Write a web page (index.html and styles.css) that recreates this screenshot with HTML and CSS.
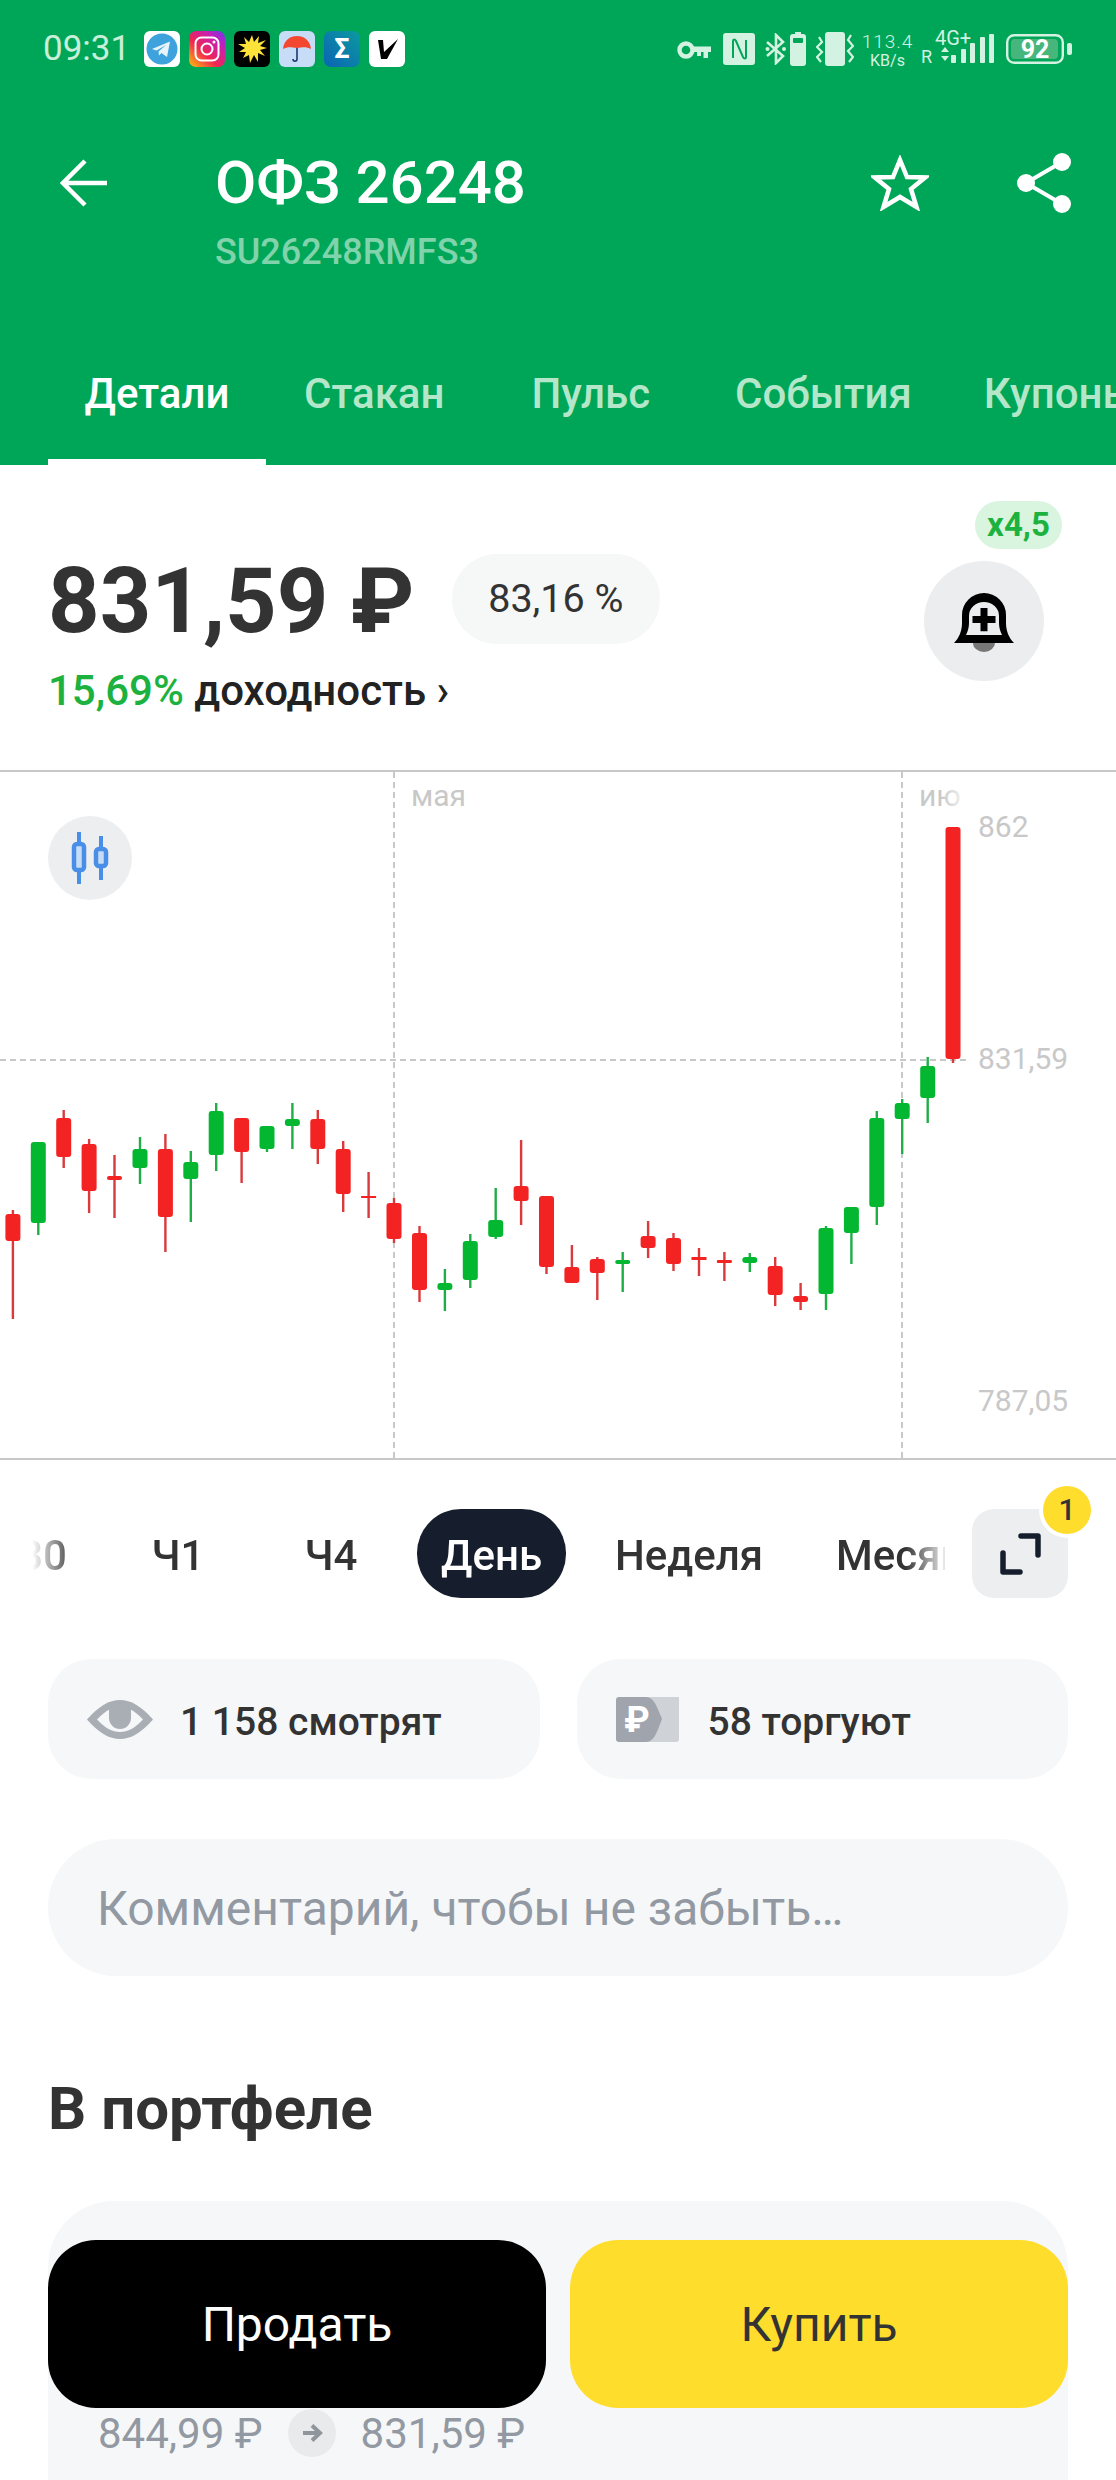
FILE: index.html
```html
<!DOCTYPE html>
<html lang="ru">
<head>
    <meta charset="UTF-8">
    <meta name="viewport" content="width=device-width, initial-scale=1.0">
    <title>ОФЗ 26248</title>
    <link rel="stylesheet" href="styles.css">
</head>
<body>
    <header class="header">
        <div class="status-bar">
            <span class="time">09:31</span>
            <div class="notif-icons">
                <svg class="notif" viewBox="0 0 36 36">
                    <rect width="36" height="36" rx="6" fill="#fff"/>
                    <circle cx="18" cy="18" r="15.5" fill="#3ea2dc"/>
                    <path d="M8 18 L26 10.5 L23 26 L17.5 22 L15 24.5 L14.5 20.5 L22 14 L12.5 19.5 Z" fill="#e8f4fb"/>
                </svg>
                <svg class="notif" viewBox="0 0 36 36">
                    <defs>
                        <linearGradient id="insta" x1="0" y1="1" x2="1" y2="0">
                            <stop offset="0" stop-color="#fdc20a"/>
                            <stop offset="0.4" stop-color="#f1264f"/>
                            <stop offset="0.75" stop-color="#c51fb8"/>
                            <stop offset="1" stop-color="#6a38f0"/>
                        </linearGradient>
                    </defs>
                    <rect width="36" height="36" rx="7" fill="url(#insta)"/>
                    <rect x="6.5" y="6.5" width="23" height="23" rx="6" fill="none" stroke="#fff" stroke-width="2"/>
                    <circle cx="18" cy="18" r="5.5" fill="none" stroke="#fff" stroke-width="2"/>
                    <circle cx="25" cy="11" r="1.5" fill="#fff"/>
                </svg>
                <svg class="notif" viewBox="0 0 36 36">
                    <rect width="36" height="36" rx="6" fill="#000"/>
                    <path d="M18 4 L20 11 L25 5 L24 12 L32 9 L26 15 L33 17 L26 19 L31 25 L24 22 L24 31 L20 24 L16 32 L15 24 L9 27 L12 21 L5 21 L11 17 L4 13 L12 13 L10 6 L15 11 Z" fill="#fde23a"/>
                </svg>
                <svg class="notif" viewBox="0 0 36 36">
                    <rect width="36" height="36" rx="6" fill="#c6dcf7"/>
                    <path d="M4 18 C5 9 11 5 18 5 C25 5 31 9 32 18 C28 16 25 16 18 17 C11 16 8 16 4 18 Z" fill="#f4472f"/>
                    <path d="M18 17 V28 C18 31 14 31 14 28" fill="none" stroke="#1d3a70" stroke-width="1.6"/>
                </svg>
                <svg class="notif" viewBox="0 0 36 36">
                    <defs>
                        <linearGradient id="sigma" x1="0" y1="1" x2="1" y2="0">
                            <stop offset="0" stop-color="#0a64b4"/>
                            <stop offset="1" stop-color="#0c9aa0"/>
                        </linearGradient>
                    </defs>
                    <rect width="36" height="36" rx="7" fill="url(#sigma)"/>
                    <text class="sigma-text" x="18" y="27">Σ</text>
                </svg>
                <svg class="notif" viewBox="0 0 36 36">
                    <rect width="36" height="36" rx="6" fill="#fff"/>
                    <path d="M9 9 H14 L15 21 L29 8 L18 28 H12 Z" fill="#000"/>
                </svg>
            </div>
            <div class="sys-icons">
                <svg class="sys-key" viewBox="0 0 34 20" width="34" height="20">
                    <circle cx="9" cy="10" r="6.5" fill="none" stroke="currentColor" stroke-width="4.4"/>
                    <path d="M14 6.5 H34 V12 H31 V18 H26.5 V12 H24 V16 H20 V12 H14 Z" fill="currentColor"/>
                </svg>
                <svg class="sys-nfc" viewBox="0 0 32 32" width="32" height="32">
                    <rect width="32" height="32" rx="3" fill="currentColor"/>
                    <path d="M10 25 V8 C10 6 12 6 13 8 L20 24 C21 26 23 26 23 24 V7" fill="none" stroke="#00a658" stroke-width="2"/>
                </svg>
                <svg class="sys-bt" viewBox="0 0 21 32" width="21" height="32">
                    <path d="M2 9 L18 23 L11 30 V2 L18 9 L2 23" fill="none" stroke="currentColor" stroke-width="2.6"/>
                    <circle cx="2.5" cy="16" r="2" fill="currentColor"/>
                    <circle cx="19" cy="16" r="2" fill="currentColor"/>
                </svg>
                <svg class="sys-cell" viewBox="0 0 16 34" width="16" height="34">
                    <path d="M5 0 H11 V2 H13 Q16 2 16 5 V31 Q16 34 13 34 H3 Q0 34 0 31 V5 Q0 2 3 2 H5 Z" fill="currentColor"/>
                    <rect x="3" y="6" width="10" height="5" rx="1" fill="#00a658"/>
                </svg>
                <svg class="sys-vibrate" viewBox="0 0 38 34" width="38" height="34">
                    <rect x="9" y="0" width="20" height="34" rx="3" fill="currentColor"/>
                    <path d="M3 5 L6 10 L1 15 L6 20 L1 25 L5 30" fill="none" stroke="currentColor" stroke-width="2.2"/>
                    <path d="M35 3 L32 8 L37 14 L32 19 L37 25 L33 30" fill="none" stroke="currentColor" stroke-width="2.2"/>
                </svg>
                <div class="sys-speed">
                    <span class="speed-num">113.4</span>
                    <span class="speed-unit">KB/s</span>
                </div>
                <svg class="sys-net" viewBox="0 -5 73 43" width="73" height="43">
                    <text class="net-text" x="14" y="13">4G+</text>
                    <text class="net-text net-roaming" x="0" y="31">R</text>
                    <path d="M20 20 L24 15 L28 20 Z M20 24 H28 L24 29 Z" fill="currentColor"/>
                    <rect x="30" y="23" width="5" height="8" rx="1" fill="currentColor"/>
                    <rect x="40" y="17" width="5" height="14" rx="1" fill="currentColor"/>
                    <rect x="49" y="11" width="5" height="20" rx="1" fill="currentColor"/>
                    <rect x="59" y="5" width="5" height="26" rx="1" fill="currentColor"/>
                    <rect x="68" y="2" width="5" height="29" rx="1" fill="currentColor"/>
                </svg>
                <svg class="sys-battery" viewBox="0 0 66 30" width="66" height="30">
                    <rect x="1.2" y="1.2" width="55.6" height="27.6" rx="7" fill="none" stroke="currentColor" stroke-width="2.4"/>
                    <rect x="5" y="5" width="47" height="20" rx="4" fill="#47b67d"/>
                    <rect x="61" y="9" width="5" height="12" rx="2" fill="currentColor"/>
                    <text class="battery-text" x="29" y="24">92</text>
                </svg>
            </div>
        </div>

        <div class="toolbar">
            <div class="tool-icon back-icon">
                <svg viewBox="0 0 48 48" width="48" height="48">
                    <path d="M47 24 H3 M25 2 L3 24 L25 46" fill="none" stroke="#fff" stroke-width="4.5"/>
                </svg>
            </div>
            <div class="title-block">
                <h1 class="title">ОФЗ 26248</h1>
                <div class="isin">SU26248RMFS3</div>
            </div>
            <div class="tool-icon star-icon">
                <svg viewBox="0 0 58 56" width="58" height="56">
                    <path d="M29 5 L36 22 L54 22.5 L40 34 L45.5 52 L29 42 L12.5 52 L18 34 L4 22.5 L22 22 Z" fill="none" stroke="#fff" stroke-width="4.5"/>
                </svg>
            </div>
            <div class="tool-icon share-icon">
                <svg viewBox="0 0 54 60" width="54" height="60">
                    <path d="M45 9 L9 30 L45 51" fill="none" stroke="#fff" stroke-width="4"/>
                    <circle cx="45" cy="9" r="9" fill="#fff"/>
                    <circle cx="9" cy="30" r="9" fill="#fff"/>
                    <circle cx="45" cy="51" r="9" fill="#fff"/>
                </svg>
            </div>
        </div>

        <nav class="tabs">
            <div class="tab active">Детали</div>
            <div class="tab">Стакан</div>
            <div class="tab">Пульс</div>
            <div class="tab">События</div>
            <div class="tab">Купоны</div>
        </nav>
    </header>

    <section class="price-block">
        <div class="price-info">
            <div class="price-row">
                <span class="price">831,59 ₽</span>
                <span class="percent-pill">83,16 %</span>
            </div>
            <div class="yield"><span class="yield-num">15,69%</span> доходность ›</div>
        </div>
        <div class="bell">
            <span class="bell-badge">x4,5</span>
            <svg viewBox="0 0 60 59" width="60" height="59">
                <path fill-rule="evenodd" d="M0 50 C5 45 8 38 8 30 V22 A22 22 0 0 1 52 22 V30 C52 38 55 45 60 50 Z M12 42 H48 C46 38 45 34 45 30 V23 A15 14 0 0 0 15 23 V30 C15 34 14 38 12 42 Z" fill="#000"/>
                <path d="M26.5 15 H33.5 V23 H41.5 V30 H33.5 V38.3 H26.5 V30 H18.5 V23 H26.5 Z" fill="#000"/>
                <path d="M19 50 H41 A11 9 0 0 1 19 50 Z" fill="#777"/>
            </svg>
        </div>
    </section>

    <section class="chart">
        <svg class="chart-svg" viewBox="0 770 1116 690" width="1116" height="690">
            <defs>
                <linearGradient id="fade-month" x1="0" x2="1" y1="0" y2="0">
                    <stop offset="0.5" stop-color="#c8c8c8"/>
                    <stop offset="1" stop-color="#ececec"/>
                </linearGradient>
            </defs>
            <path class="grid-line" d="M394 772 V1458 M902 772 V1458 M0 1060 H966"/>
            <text class="axis-label" x="411" y="806">мая</text>
            <text class="axis-label fade-label" x="919" y="806">ию</text>
            <text class="axis-label" x="978" y="837">862</text>
            <text class="axis-label" x="978" y="1069">831,59</text>
            <text class="axis-label" x="978" y="1411">787,05</text>

            <path class="wick-red" d="M12.9 1210V1319 M63.7 1110V1168 M89.1 1139V1213 M114.5 1155V1218 M165.4 1134V1252 M241.6 1118V1183 M317.8 1110V1164 M343.2 1141V1212 M368.6 1172V1218 M394 1198V1243 M419.5 1226V1302 M521.1 1140V1225 M546.5 1196V1274 M571.9 1245V1283 M597.3 1257V1300 M648.1 1221V1258 M673.5 1233V1271 M699 1248V1276 M724.4 1252V1281 M775.2 1257V1306 M800.6 1283V1310 M953 1050V1063"/>
            <path class="wick-green" d="M38.3 1142V1235 M140 1137V1184 M190.8 1151V1222 M216.2 1103V1171 M267 1126V1152 M292.4 1103V1149 M444.9 1269V1311 M470.3 1234V1288 M495.7 1188V1239 M622.7 1252V1292 M749.8 1253V1272 M826 1226V1310 M851.4 1207V1264 M876.8 1111V1225 M902.2 1099V1154 M927.7 1057V1123"/>

            <g class="body-red">
                <rect x="5.4" y="1214" width="15" height="27" rx="3"/>
                <rect x="56.2" y="1118" width="15" height="39" rx="3"/>
                <rect x="81.6" y="1144" width="15" height="47" rx="3"/>
                <rect x="107" y="1176" width="15" height="4" rx="2"/>
                <rect x="157.9" y="1149" width="15" height="68" rx="3"/>
                <rect x="234.1" y="1118" width="15" height="34" rx="3"/>
                <rect x="310.3" y="1119" width="15" height="30" rx="3"/>
                <rect x="335.7" y="1149" width="15" height="45" rx="3"/>
                <rect x="361.1" y="1196" width="15" height="2"/>
                <rect x="386.5" y="1203" width="15" height="36" rx="3"/>
                <rect x="412" y="1233" width="15" height="57" rx="3"/>
                <rect x="513.6" y="1186" width="15" height="15" rx="3"/>
                <rect x="539" y="1196" width="15" height="71" rx="3"/>
                <rect x="564.4" y="1267" width="15" height="16" rx="3"/>
                <rect x="589.8" y="1259" width="15" height="14" rx="3"/>
                <rect x="640.6" y="1236" width="15" height="12" rx="3"/>
                <rect x="666" y="1238" width="15" height="26" rx="3"/>
                <rect x="691.5" y="1257" width="15" height="3"/>
                <rect x="716.9" y="1260" width="15" height="3" rx="1"/>
                <rect x="767.7" y="1266" width="15" height="29" rx="3"/>
                <rect x="793.1" y="1296" width="15" height="6" rx="3"/>
                <rect x="945.5" y="827" width="15" height="232" rx="3"/>
            </g>
            <g class="body-green">
                <rect x="30.8" y="1142" width="15" height="81" rx="3"/>
                <rect x="132.5" y="1149" width="15" height="19" rx="3"/>
                <rect x="183.3" y="1162" width="15" height="17" rx="3"/>
                <rect x="208.7" y="1111" width="15" height="44" rx="3"/>
                <rect x="259.5" y="1126" width="15" height="23" rx="3"/>
                <rect x="284.9" y="1119" width="15" height="7" rx="3"/>
                <rect x="437.4" y="1283" width="15" height="7" rx="3"/>
                <rect x="462.8" y="1241" width="15" height="39" rx="3"/>
                <rect x="488.2" y="1220" width="15" height="17" rx="3"/>
                <rect x="615.2" y="1260" width="15" height="4" rx="2"/>
                <rect x="742.3" y="1257" width="15" height="6" rx="3"/>
                <rect x="818.5" y="1228" width="15" height="66" rx="3"/>
                <rect x="843.9" y="1207" width="15" height="26" rx="3"/>
                <rect x="869.3" y="1118" width="15" height="89" rx="3"/>
                <rect x="894.7" y="1103" width="15" height="16" rx="3"/>
                <rect x="920.2" y="1066" width="15" height="32" rx="3"/>
            </g>
        </svg>
        <div class="chart-type">
            <svg viewBox="0 0 44 52" width="44" height="52">
                <path d="M11 0 V52 M33 4 V48" fill="none" stroke="#4a8fe7" stroke-width="4"/>
                <rect x="6" y="12" width="10" height="26" rx="3" fill="#c9dcf5" stroke="#4a8fe7" stroke-width="4.5"/>
                <rect x="28" y="17" width="10" height="17" rx="3" fill="#c9dcf5" stroke="#4a8fe7" stroke-width="4.5"/>
            </svg>
        </div>
    </section>

    <div class="period-row">
        <div class="periods">
            <div class="period period-first">30</div>
            <div class="period period-fixed">Ч1</div>
            <div class="period period-fixed">Ч4</div>
            <div class="period selected">День</div>
            <div class="period">Неделя</div>
            <div class="period">Месяц</div>
        </div>
        <div class="fullscreen">
            <svg viewBox="0 0 41 42" width="41" height="42">
                <path d="M21 3 H38 V22 M3 20 V39 H20" fill="none" stroke="#161e2d" stroke-width="5.5" stroke-linecap="round" stroke-linejoin="round"/>
            </svg>
            <span class="fullscreen-badge">1</span>
        </div>
    </div>

    <div class="stats">
        <div class="stat">
            <svg viewBox="0 0 66 39" width="66" height="39">
                <path d="M0 19.5 C12 6 22 0 33 0 S54 6 66 19.5 C54 33 44 39 33 39 S12 33 0 19.5 Z" fill="#a9aeb5"/>
                <path d="M10 19.5 C18 11 25 7 33 7 S48 11 56 19.5 C48 28 41 32 33 32 S18 28 10 19.5 Z" fill="#f6f7f8"/>
                <path d="M22 4 H44 V18 A11 11 0 0 1 22 18 Z" fill="#a9aeb5"/>
            </svg>
            <span class="stat-text">1 158 смотрят</span>
        </div>
        <div class="stat">
            <svg viewBox="0 0 63 45" width="63" height="45">
                <path d="M30 0 H63 V42 Q63 45 60 45 H30 Z" fill="#cfd2d6"/>
                <path d="M3 0 H30 C38 0 41 10 46 22 C41 35 38 45 30 45 H3 Q0 45 0 42 V3 Q0 0 3 0 Z" fill="#a0a5ad"/>
                <text class="ruble-mark" x="21" y="35">₽</text>
            </svg>
            <span class="stat-text">58 торгуют</span>
        </div>
    </div>

    <div class="comment">Комментарий, чтобы не забыть…</div>

    <h2 class="section-title">В портфеле</h2>

    <div class="card">
        <div class="price-change">
            <span>844,99 ₽</span>
            <span class="change-arrow">
                <svg viewBox="0 0 22 20" width="22" height="20">
                    <path d="M2 10 H19 M11 2.5 L19 10 L11 17.5" fill="none" stroke="#8f959d" stroke-width="4"/>
                </svg>
            </span>
            <span>831,59 ₽</span>
        </div>
    </div>

    <div class="actions">
        <button class="action-btn sell">Продать</button>
        <button class="action-btn buy">Купить</button>
    </div>
</body>
</html>
```

FILE: styles.css
```css
* {
    box-sizing: border-box;
}

body {
    position: relative;
    width: 1116px;
    height: 2480px;
    margin: 0;
    overflow: hidden;
    background: #fff;
    color: #333;
    font-family: Roboto, "Liberation Sans", sans-serif;
}

/* header */
.header {
    display: flex;
    flex-direction: column;
    height: 465px;
    background: #00a658;
    color: #fff;
}

.status-bar {
    display: flex;
    align-items: flex-start;
    height: 153px;
    padding: 31px 44px 0 43px;
    color: #d4f2e1;
}

.time {
    font-size: 35px;
    line-height: 36px;
    color: #c8efd9;
}

.notif-icons {
    display: flex;
    gap: 9px;
    margin-left: 14px;
}

.notif {
    width: 36px;
    height: 36px;
}

.sigma-text {
    font-size: 27px;
    font-weight: 700;
    text-anchor: middle;
    fill: #fff;
}

.sys-icons {
    display: flex;
    align-items: flex-start;
    margin-left: auto;
}

.sys-key {
    margin: 9px 12px 0 0;
}

.sys-nfc {
    margin: 2px 10px 0 0;
}

.sys-bt {
    margin: 2px 4px 0 0;
}

.sys-cell {
    margin: 1px 10px 0 0;
}

.sys-vibrate {
    margin: 1px 7px 0 0;
}

.sys-speed {
    display: flex;
    flex-direction: column;
    align-items: center;
    width: 53px;
    margin-right: 7px;
}

.speed-num {
    font-size: 19px;
    line-height: 22px;
    font-weight: 300;
    letter-spacing: 1px;
    white-space: nowrap;
}

.speed-unit {
    margin-top: -2px;
    font-size: 16px;
    line-height: 19px;
    white-space: nowrap;
}

.sys-net {
    margin: -4px 12px 0 0;
}

.net-text {
    font-size: 20px;
    fill: currentColor;
}

.net-roaming {
    font-size: 18px;
}

.sys-battery {
    margin-top: 3px;
}

.battery-text {
    font-size: 25px;
    font-weight: 700;
    text-anchor: middle;
    fill: #fff;
}

.toolbar {
    display: flex;
    align-items: flex-start;
    padding: 0 45px 0 60px;
}

.tool-icon {
    display: flex;
    align-items: center;
    height: 60px;
}

.title-block {
    flex: 1;
    margin-left: 107px;
}

.title {
    margin: 0;
    font-size: 60px;
    line-height: 60px;
    font-weight: 500;
}

.isin {
    margin-top: 21px;
    font-size: 36px;
    line-height: 36px;
    font-weight: 500;
    color: #80d3aa;
}

.star-icon {
    margin-right: 88px;
}

.tabs {
    display: flex;
    margin-top: auto;
    margin-left: 48px;
    overflow: hidden;
}

.tab {
    flex: none;
    min-width: 216.5px;
    height: 118px;
    padding: 0 36px;
    font-size: 42px;
    line-height: 94px;
    font-weight: 500;
    text-align: center;
    color: #b4e6c9;
}

.tab.active {
    min-width: 218px;
    color: #fff;
    border-bottom: 6px solid #fff;
}

/* price */
.price-block {
    display: flex;
    justify-content: space-between;
    height: 305px;
    padding: 0 72px 0 48px;
}

.price-info {
    padding-top: 89px;
}

.price-row {
    display: flex;
    align-items: flex-start;
}

.price {
    font-size: 90px;
    line-height: 96px;
    font-weight: 700;
}

.percent-pill {
    height: 90px;
    margin-left: 38px;
    padding: 0 36px;
    border-radius: 45px;
    background: #f6f7f7;
    font-size: 39.5px;
    line-height: 90px;
}

.yield {
    margin-top: 17px;
    font-size: 42px;
    line-height: 48px;
    font-weight: 500;
    color: #222;
}

.yield-num {
    color: #1db23f;
}

.bell {
    position: relative;
    display: flex;
    align-items: center;
    justify-content: center;
    width: 120px;
    height: 120px;
    margin-top: 96px;
    padding-top: 2px;
    border-radius: 50%;
    background: #ebedee;
}

.bell-badge {
    position: absolute;
    top: -60px;
    left: 51px;
    width: 87px;
    height: 48px;
    border-radius: 24px;
    background: #d9f5df;
    color: #1db23f;
    font-size: 33px;
    line-height: 48px;
    font-weight: 700;
    text-align: center;
}

/* chart */
.chart {
    position: relative;
    height: 690px;
    border-top: 2px solid #c8c8c8;
    border-bottom: 2px solid #c8c8c8;
}

.chart-svg {
    display: block;
    margin-top: -2px;
}

.grid-line {
    fill: none;
    stroke: #c8c8c8;
    stroke-width: 2;
    stroke-dasharray: 6 4;
}

.axis-label {
    font-size: 30px;
    fill: #c8c8c8;
}

.fade-label {
    fill: url(#fade-month);
}

.wick-red {
    fill: none;
    stroke: #d93a3c;
    stroke-width: 2.4;
}

.wick-green {
    fill: none;
    stroke: #1fae46;
    stroke-width: 2.4;
}

.body-red {
    fill: #f42323;
}

.body-green {
    fill: #04b731;
}

.chart-type {
    position: absolute;
    top: 44px;
    left: 48px;
    display: flex;
    align-items: center;
    justify-content: center;
    width: 84px;
    height: 84px;
    border-radius: 50%;
    background: #eceef0;
}

/* periods */
.period-row {
    display: flex;
    height: 89px;
    margin-top: 49px;
    padding-right: 48px;
}

.periods {
    display: flex;
    width: 945px;
    overflow: hidden;
    gap: 5px;
    -webkit-mask-image: linear-gradient(to right, transparent 32px, #000 75px, #000 905px, transparent 950px);
    mask-image: linear-gradient(to right, transparent 32px, #000 75px, #000 905px, transparent 950px);
}

.period {
    flex: none;
    display: flex;
    align-items: center;
    justify-content: center;
    height: 89px;
    padding: 4px 24px 0;
    border-radius: 44px;
    font-size: 42px;
    font-weight: 500;
}

.period-first {
    justify-content: flex-end;
    width: 99px;
    padding: 4px 32px 0 0;
}

.period-fixed {
    width: 148px;
}

.selected {
    width: 149px;
    margin: 0 20px 0 7px;
    padding: 4px 0 0;
    background: #161e2d;
    color: #fff;
}

.period.selected + .period {
    margin-right: 20px;
}

.fullscreen {
    position: relative;
    display: flex;
    align-items: center;
    justify-content: center;
    width: 96px;
    height: 89px;
    margin-left: auto;
    border-radius: 22px;
    background: #eceef0;
}

.fullscreen-badge {
    position: absolute;
    top: -23px;
    right: -23px;
    width: 48px;
    height: 48px;
    border-radius: 50%;
    background: #ffdd2d;
    box-shadow: 0 0 0 4px #fff;
    color: #333;
    font-size: 30px;
    line-height: 48px;
    font-weight: 500;
    text-align: center;
}

/* stats */
.stats {
    display: flex;
    gap: 37px;
    margin: 61px 48px 0;
}

.stat {
    flex: 1;
    display: flex;
    align-items: center;
    gap: 29px;
    height: 120px;
    padding-left: 39px;
    border-radius: 44px;
    background: #f6f7f8;
    font-size: 39px;
    font-weight: 500;
}

.stat-text {
    padding-top: 5px;
}

.stat:first-child .stat-text {
    margin-left: -2px;
}

.ruble-mark {
    font-size: 36px;
    font-weight: 700;
    text-anchor: middle;
    fill: #fff;
}

.comment {
    height: 137px;
    margin: 60px 48px 0;
    padding-left: 49px;
    border-radius: 68px;
    background: #f6f7f8;
    color: #9299a2;
    font-size: 48px;
    line-height: 140px;
}

.section-title {
    margin: 99px 48px 0;
    font-size: 60px;
    line-height: 68px;
    font-weight: 700;
}

/* card and buttons */
.card {
    height: 300px;
    margin: 58px 48px 0;
    padding: 208px 0 0 50px;
    border-radius: 66px 66px 0 0;
    background: #f6f7f8;
}

.price-change {
    display: flex;
    align-items: center;
    gap: 25px;
    height: 48px;
    color: #9299a2;
    font-size: 42px;
}

.change-arrow {
    display: flex;
    align-items: center;
    justify-content: center;
    width: 48px;
    height: 48px;
    border-radius: 50%;
    background: #e8eaec;
}

.actions {
    position: absolute;
    top: 2240px;
    left: 48px;
    right: 48px;
    display: grid;
    grid-template-columns: 498px 498px;
    gap: 24px;
}

.action-btn {
    height: 168px;
    border: none;
    border-radius: 48px;
    font-family: inherit;
    font-size: 48px;
}

.sell {
    background: #000;
    color: #fff;
}

.buy {
    background: #ffdd2d;
    color: #333;
}
```
